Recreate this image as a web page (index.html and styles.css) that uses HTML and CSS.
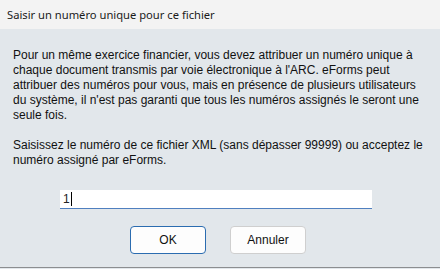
FILE: index.html
```html
<!DOCTYPE html>
<html lang="fr">
<head>
<meta charset="utf-8">
<link rel="stylesheet" href="styles.css">
</head>
<body>
<div class="window">
  <div class="titlebar">Saisir un numéro unique pour ce fichier</div>
  <div class="content">
    <p class="msg">Pour un même exercice financier, vous devez attribuer un numéro unique à chaque document transmis par voie électronique à l'ARC. eForms peut attribuer des numéros pour vous, mais en présence de plusieurs utilisateurs du système, il n'est pas garanti que tous les numéros assignés le seront une seule fois.</p>
    <p class="msg">Saisissez le numéro de ce fichier XML (sans dépasser 99999) ou acceptez le numéro assigné par eForms.</p>
    <div class="field"><span class="value">1</span><span class="caret"></span></div>
    <div class="buttons">
      <button class="btn btn-default">OK</button>
      <button class="btn">Annuler</button>
    </div>
  </div>
</div>
</body>
</html>
```
FILE: styles.css
```css
html, body {
  margin: 0;
  padding: 0;
  width: 440px;
  height: 269px;
  overflow: hidden;
  background: #e2e7eb;
}
.window {
  width: 440px;
  height: 267px;
  border-bottom: 1px solid #8c8e90;
  background: #e2e7eb;
  display: flex;
  flex-direction: column;
}
.titlebar {
  height: 29px;
  box-sizing: border-box;
  background: #f3f3f3;
  font-family: "Noto Sans", sans-serif;
  font-size: 11.2px;
  color: #1a1a1a;
  padding: 7px 0 0 7px;
  line-height: 16px;
}
.content {
  padding: 19px 0 0 13px;
  font-family: "Liberation Sans", Arial, sans-serif;
  font-size: 12px;
  line-height: 15px;
  color: #111;
}
.msg {
  margin: 0 0 15px 0;
  width: 415px;
}
.field {
  margin: 22px 0 0 47px;
  width: 312px;
  height: 19px;
  box-sizing: border-box;
  background: #fff;
  border-bottom: 1px solid #4f7fbf;
  display: flex;
  align-items: center;
  padding-left: 3px;
}
.value {
  font-family: "Liberation Sans", Arial, sans-serif;
  font-size: 12px;
  color: #222;
}
.caret {
  width: 1px;
  height: 14px;
  background: #000;
  margin-left: 1px;
}
.buttons {
  display: flex;
  gap: 24px;
  margin: 17px 0 0 117px;
}
.btn {
  width: 76px;
  height: 28px;
  box-sizing: border-box;
  background: #fdfdfd;
  border: 1px solid #cfcfcf;
  border-radius: 4px;
  font-family: "Liberation Sans", Arial, sans-serif;
  font-size: 12px;
  color: #111;
  padding: 0;
}
.btn-default {
  border: 1px solid #2b6cb0;
}
```
